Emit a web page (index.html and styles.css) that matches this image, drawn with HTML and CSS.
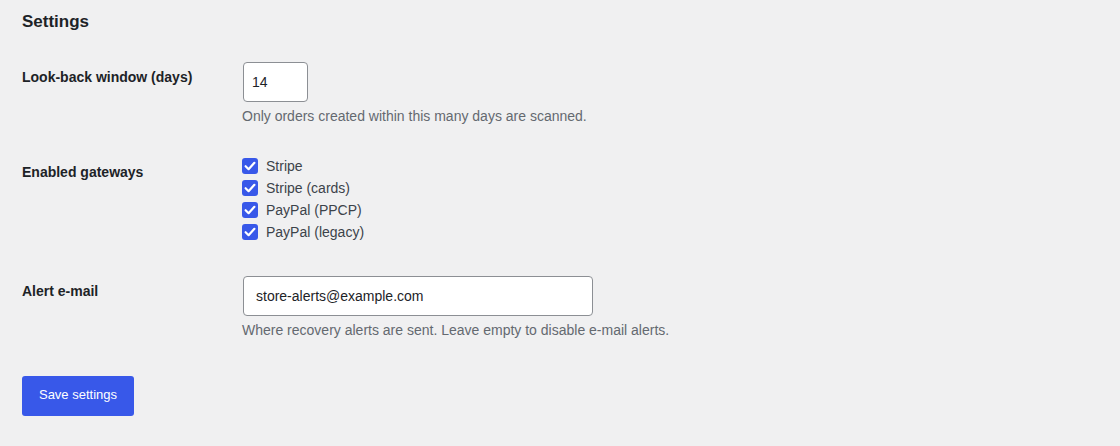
FILE: index.html
```html
<!DOCTYPE html>
<html lang="en">
<head>
<meta charset="utf-8">
<title>Settings</title>
<link rel="stylesheet" href="styles.css">
</head>
<body>
<div class="wrap">
  <h2 class="title">Settings</h2>
  <form class="form">
    <div class="row row-days">
      <div class="label">Look-back window (days)</div>
      <div class="field">
        <input class="input input-small" type="text" value="14">
        <p class="description">Only orders created within this many days are scanned.</p>
      </div>
    </div>
    <div class="row row-gateways">
      <div class="label">Enabled gateways</div>
      <div class="field">
        <label class="check"><span class="box"><svg viewBox="0 0 16 16" width="16" height="16"><path d="M3.6 8.2 L6.6 11.2 L12.4 4.8" fill="none" stroke="#fff" stroke-width="2.2" stroke-linecap="round" stroke-linejoin="round"/></svg></span>Stripe</label>
        <label class="check"><span class="box"><svg viewBox="0 0 16 16" width="16" height="16"><path d="M3.6 8.2 L6.6 11.2 L12.4 4.8" fill="none" stroke="#fff" stroke-width="2.2" stroke-linecap="round" stroke-linejoin="round"/></svg></span>Stripe (cards)</label>
        <label class="check"><span class="box"><svg viewBox="0 0 16 16" width="16" height="16"><path d="M3.6 8.2 L6.6 11.2 L12.4 4.8" fill="none" stroke="#fff" stroke-width="2.2" stroke-linecap="round" stroke-linejoin="round"/></svg></span>PayPal (PPCP)</label>
        <label class="check"><span class="box"><svg viewBox="0 0 16 16" width="16" height="16"><path d="M3.6 8.2 L6.6 11.2 L12.4 4.8" fill="none" stroke="#fff" stroke-width="2.2" stroke-linecap="round" stroke-linejoin="round"/></svg></span>PayPal (legacy)</label>
      </div>
    </div>
    <div class="row row-email">
      <div class="label">Alert e-mail</div>
      <div class="field">
        <input class="input input-wide" type="text" value="store-alerts@example.com">
        <p class="description">Where recovery alerts are sent. Leave empty to disable e-mail alerts.</p>
      </div>
    </div>
    <div class="actions">
      <button class="button" type="button">Save settings</button>
    </div>
  </form>
</div>
</body>
</html>
```
FILE: styles.css
```css
* { box-sizing: border-box; }
html, body {
  margin: 0;
  padding: 0;
  background: #f0f0f1;
  font-family: "Liberation Sans", Arial, sans-serif;
  color: #1d2327;
}
.wrap {
  padding: 11px 22px 0 22px;
}
.title {
  margin: 0;
  font-size: 17px;
  line-height: 22px;
  font-weight: 700;
  color: #1d2327;
}
.form {
  margin: 14px 0 0 0;
}
.row {
  display: grid;
  grid-template-columns: 220px 1fr;
}
.label {
  padding-top: 21px;
  font-size: 14px;
  font-weight: 700;
  line-height: 19px;
  color: #1d2327;
}
.field {
  padding: 15px 0 15px 0;
  display: flex;
  flex-direction: column;
  align-items: flex-start;
}
.row-gateways .field {
  padding: 13px 0 18px 0;
}
.input {
  margin: 0 1px;
  height: 40px;
  border: 1px solid #8c8f94;
  border-radius: 4px;
  background: #fff;
  font-family: "Liberation Sans", Arial, sans-serif;
  font-size: 14px;
  color: #1d2327;
  outline: none;
}
.input-small {
  width: 65px;
  padding: 0 8px;
}
.input-wide {
  width: 350px;
  padding: 0 12px;
}
.description {
  margin: 4px 0 0 0;
  font-size: 14px;
  line-height: 21px;
  color: #646970;
}
.check {
  display: flex;
  align-items: center;
  height: 22px;
  font-size: 14px;
  color: #3c434a;
}
.box {
  width: 16px;
  height: 16px;
  border-radius: 3px;
  background: #3858e9;
  margin-right: 8px;
  display: flex;
}
.actions {
  padding-top: 20px;
}
.button {
  width: 112px;
  height: 40px;
  border: none;
  border-radius: 3px;
  background: #3858e9;
  color: #fff;
  font-family: "Liberation Sans", Arial, sans-serif;
  font-size: 13px;
  line-height: 38px;
  padding: 0 0 2px 0;
}
```
